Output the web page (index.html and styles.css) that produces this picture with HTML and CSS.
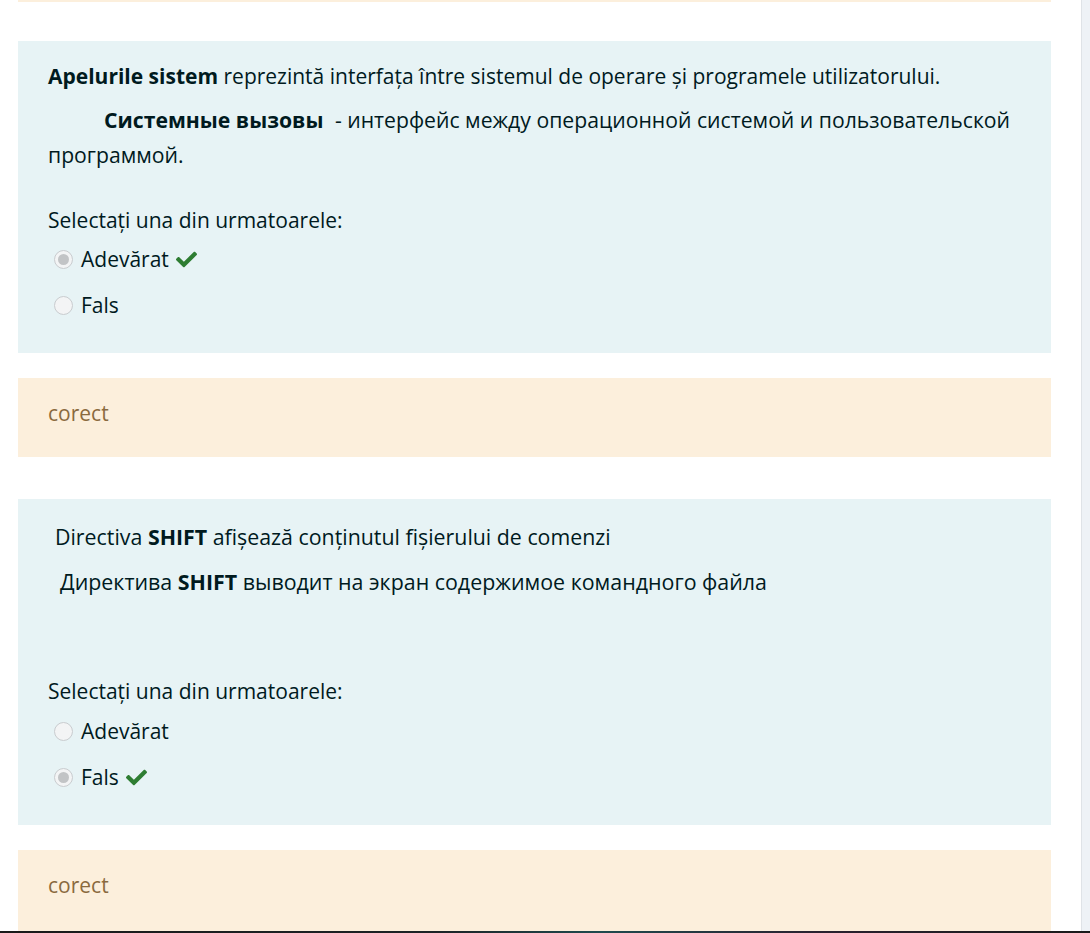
FILE: index.html
```html
<!DOCTYPE html>
<html lang="ro">
<head>
<meta charset="utf-8">
<title>Quiz review</title>
<link rel="stylesheet" href="styles.css">
</head>
<body>
<div class="screen">
  <main class="page">
    <div class="prev-feedback"></div>

    <section class="card question q1">
      <p class="line"><strong>Apelurile sistem</strong> reprezintă interfața între sistemul de operare și programele utilizatorului.</p>
      <p class="line ru"><strong class="term">Системные вызовы</strong> - интерфейс между операционной системой и пользовательской<br>программой.</p>
      <p class="prompt">Selectați una din urmatoarele:</p>
      <div class="answers">
        <label class="answer"><span class="radio checked"></span><span class="label">Adevărat</span><svg class="check" viewBox="0 0 512 512"><path d="M173.898 439.404l-166.4-166.4c-9.997-9.997-9.997-26.206 0-36.204l36.203-36.204c9.997-9.998 26.207-9.998 36.204 0L192 312.69 432.095 72.596c9.997-9.997 26.207-9.997 36.204 0l36.203 36.204c9.997 9.997 9.997 26.206 0 36.204l-294.4 294.401c-9.998 9.997-26.207 9.997-36.204-.001z"/></svg></label>
        <label class="answer"><span class="radio"></span><span class="label">Fals</span></label>
      </div>
    </section>

    <section class="card feedback">
      <p class="line">corect</p>
    </section>

    <section class="card question q2">
      <p class="line d1">Directiva <strong>SHIFT</strong> afișează conținutul fișierului de comenzi</p>
      <p class="line d2">Директива <strong>SHIFT</strong> выводит на экран содержимое командного файла</p>
      <p class="prompt">Selectați una din urmatoarele:</p>
      <div class="answers">
        <label class="answer"><span class="radio"></span><span class="label">Adevărat</span></label>
        <label class="answer"><span class="radio checked"></span><span class="label">Fals</span><svg class="check" viewBox="0 0 512 512"><path d="M173.898 439.404l-166.4-166.4c-9.997-9.997-9.997-26.206 0-36.204l36.203-36.204c9.997-9.998 26.207-9.998 36.204 0L192 312.69 432.095 72.596c9.997-9.997 26.207-9.997 36.204 0l36.203 36.204c9.997 9.997 9.997 26.206 0 36.204l-294.4 294.401c-9.998 9.997-26.207 9.997-36.204-.001z"/></svg></label>
      </div>
    </section>

    <section class="card feedback last">
      <p class="line">corect</p>
    </section>
  </main>
  <div class="scrollbar"></div>
</div>
<div class="taskbar"></div>
</body>
</html>
```
FILE: styles.css
```css
html, body {
  margin: 0;
  padding: 0;
  height: 933px;
  overflow: hidden;
  background: #ffffff;
}

body {
  font-family: "Open Sans", "Noto Sans", "DejaVu Sans", sans-serif;
  font-size: 21px;
  color: #001a1e;
  display: flex;
  flex-direction: column;
}

p { margin: 0; }

strong { font-weight: 700; }

.screen {
  flex: 1;
  display: flex;
  min-height: 0;
}

.page {
  flex: 1;
  padding: 0 30px 0 18px;
  display: flex;
  flex-direction: column;
  overflow: hidden;
}

.prev-feedback {
  height: 2px;
  background: #fcefdc;
  flex: none;
}

.card {
  flex: none;
  padding: 0 30px;
}

.question {
  background: #e7f3f5;
  padding-bottom: 25px;
}

.q1 {
  margin-top: 39px;
  padding-top: 20px;
}

.line {
  line-height: 30px;
}

.q1 .ru {
  font-size: 21.2px;
  line-height: 35px;
  margin-top: 11px;
  text-indent: 56px;
}

.term {
  padding-right: 6px;
}

.q1 .prompt {
  margin-top: 33px;
}

.prompt {
  line-height: 30px;
  margin-bottom: 1px;
}

.answers {
  display: flex;
  flex-direction: column;
}

.answer {
  height: 46px;
  display: flex;
  align-items: center;
  padding-left: 6px;
}

.radio {
  width: 17px;
  height: 17px;
  border: 1px solid #c9cccf;
  border-radius: 50%;
  background: #f3f4f5;
  margin-right: 8px;
  display: flex;
  align-items: center;
  justify-content: center;
  box-sizing: content-box;
}

.radio.checked::after {
  content: "";
  width: 11px;
  height: 11px;
  border-radius: 50%;
  background: #c2c4c6;
}

.check {
  width: 21px;
  height: 21px;
  fill: #2e7d32;
  margin-left: 7px;
}

.feedback {
  background: #fcefdc;
  color: #8a6a3e;
  margin-top: 25px;
  padding-top: 20px;
  height: 59px;
}

.q2 {
  margin-top: 42px;
  padding-top: 23px;
}

.q2 .d1 {
  padding-left: 7px;
  font-size: 21.35px;
}

.q2 .d2 {
  padding-left: 12px;
  margin-top: 15px;
  font-size: 21.4px;
}

.q2 .prompt {
  margin-top: 79px;
  margin-bottom: 2px;
}

.feedback.last {
  height: 70px;
}

.scrollbar {
  width: 8px;
  flex: none;
  border-left: 1px solid #dfe3e7;
  background: #eef2f6;
}

.taskbar {
  height: 2px;
  flex: none;
  background: linear-gradient(90deg, #1a1a1a 0%, #1c2326 40%, #1f4a4e 55%, #2a2230 75%, #1a1a1a 100%);
}
```
